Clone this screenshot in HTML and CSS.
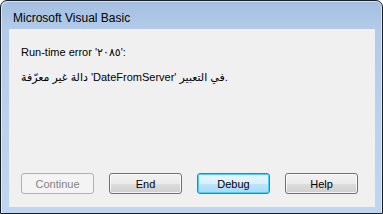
FILE: index.html
```html
<!DOCTYPE html>
<html lang="en">
<head>
<meta charset="utf-8">
<title>Microsoft Visual Basic</title>
<link rel="stylesheet" href="styles.css">
</head>
<body>
<div class="window">
  <div class="titlebar"><span class="title">Microsoft Visual Basic</span></div>
  <div class="client">
    <div class="message">
      <p class="line">Run-time error '٢٠٨٥':</p>
      <p class="line line-second" dir="ltr">دالة غير معرّفة 'DateFromServer' في التعبير.</p>
    </div>
    <div class="buttons">
      <button class="btn btn-disabled" disabled>Continue</button>
      <button class="btn">End</button>
      <button class="btn btn-default">Debug</button>
      <button class="btn">Help</button>
    </div>
  </div>
</div>
</body>
</html>
```
FILE: styles.css
```css
html, body {
  margin: 0;
  padding: 0;
  background: #ffffff;
}

.window {
  width: 383px;
  height: 214px;
  box-sizing: border-box;
  border: 1px solid #1a1f26;
  border-radius: 7px 7px 0 0;
  background: linear-gradient(180deg, #a3bfe1 0px, #b3cbe8 28px, #bad2ec 120px, #bed6ef 100%);
  box-shadow: inset 1px 1px 0 rgba(255, 255, 255, 0.55), inset -1px 0 0 rgba(225, 245, 255, 0.7);
  padding: 0 7px 6px 8px;
  display: flex;
  flex-direction: column;
  font-family: "Liberation Sans", "DejaVu Sans", sans-serif;
}

.titlebar {
  height: 28px;
  box-sizing: border-box;
  padding: 10px 0 0 4px;
  line-height: 14px;
  font-size: 12px;
  color: #000000;
}

.client {
  flex: 1;
  background: #f0f0f0;
  display: flex;
  flex-direction: column;
}

.message {
  padding: 16px 12px 0 12px;
  font-size: 11px;
  color: #000000;
}

.line {
  margin: 0;
  line-height: 14px;
  white-space: nowrap;
}

.line-second {
  margin-top: 11px;
}

.buttons {
  margin-top: auto;
  padding: 0 0 13px 12px;
  display: flex;
  gap: 15px;
}

.btn {
  width: 73px;
  height: 21px;
  box-sizing: border-box;
  padding: 0;
  font-family: "Liberation Sans", "DejaVu Sans", sans-serif;
  font-size: 11px;
  color: #000000;
  border: 1px solid #707070;
  border-radius: 3px;
  background: linear-gradient(180deg, #f2f2f2 0%, #ebebeb 50%, #dddddd 50%, #cfcfcf 100%);
  box-shadow: inset 0 0 0 1px rgba(255, 255, 255, 0.75);
}

.btn-default {
  border-color: #3c7fb1;
  background: linear-gradient(180deg, #eaf6fd 0%, #d9f0fc 50%, #bee6fd 50%, #a7d9f5 100%);
  box-shadow: inset 0 0 0 1px #48d0fb;
}

.btn-disabled {
  border-color: #adb2b5;
  background: #f4f4f4;
  color: #838383;
  box-shadow: none;
}
```
